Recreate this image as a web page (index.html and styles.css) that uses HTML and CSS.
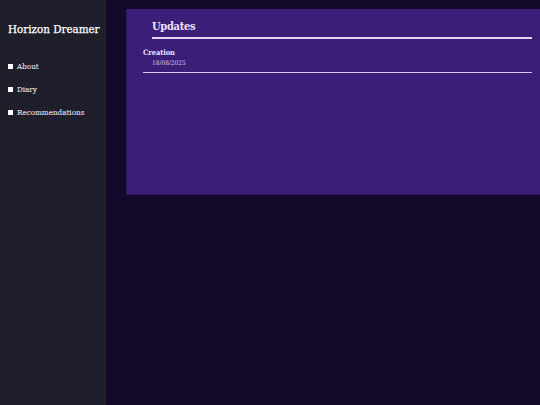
FILE: index.html
```html
<!DOCTYPE html>
<html>
<head>
<meta charset="utf-8">
<link rel="stylesheet" href="styles.css">
</head>
<body>
<div class="layout">
  <aside class="sidebar">
    <h1 class="brand">Horizon Dreamer</h1>
    <ul class="nav">
      <li>About</li>
      <li>Diary</li>
      <li>Recommendations</li>
    </ul>
  </aside>
  <main class="main">
    <section class="panel">
      <h2 class="panel-title">Updates</h2>
      <div class="entry">
        <div class="entry-title">Creation</div>
        <div class="entry-date">18/08/2025</div>
      </div>
    </section>
  </main>
</div>
</body>
</html>
```
FILE: styles.css
```css
html, body { margin: 0; padding: 0; height: 100%; }
body {
  background: #130a2b;
  font-family: "DejaVu Serif", "Liberation Serif", serif;
  font-stretch: condensed;
  color: #f0eaf8;
}
.layout { display: flex; height: 405px; }
.sidebar {
  width: 106px;
  background: #1e1f2b;
  padding: 21px 0 0 8px;
  box-sizing: border-box;
}
.brand {
  margin: 0;
  font-size: 11.5px;
  line-height: 16px;
  font-weight: normal;
  color: #ffffff;
  white-space: nowrap;
  -webkit-text-stroke: 0.25px #ffffff;
}
.nav {
  list-style: none;
  margin: 24px 0 0 0;
  padding: 0;
  display: flex;
  flex-direction: column;
  gap: 12px;
}
.nav li {
  font-size: 8px;
  line-height: 11px;
  color: #dcdce4;
  display: flex;
  align-items: center;
  gap: 4px;
  height: 11px;
  -webkit-text-stroke: 0.15px #dcdce4;
}
.nav li::before {
  content: "";
  width: 5px;
  height: 5px;
  background: #ffffff;
  display: block;
}
.main { flex: 1; padding: 9px 0 0 20px; }
.panel {
  background: #3b1e78;
  height: 186px;
  box-sizing: border-box;
  border-left: 1px solid #2e1760;
  border-bottom: 1px solid #2e1760;
  padding: 10px 8px 0 16px;
}
.panel-title {
  margin: 0 0 0 9px;
  font-size: 11px;
  line-height: 16px;
  font-weight: bold;
  letter-spacing: -0.3px;
  color: #efe4fb;
  padding-bottom: 2px;
  border-bottom: 2px solid #e3d4f8;
}
.entry {
  margin-top: 9px;
  border-bottom: 1px solid #d8c8f0;
  padding-bottom: 5px;
}
.entry-title { font-size: 7.5px; line-height: 10px; font-weight: bold; color: #ece2fa; letter-spacing: -0.1px; }
.entry-date { font-size: 6.5px; line-height: 8px; color: #d8cdea; margin: 1px 0 0 9px; }
```
